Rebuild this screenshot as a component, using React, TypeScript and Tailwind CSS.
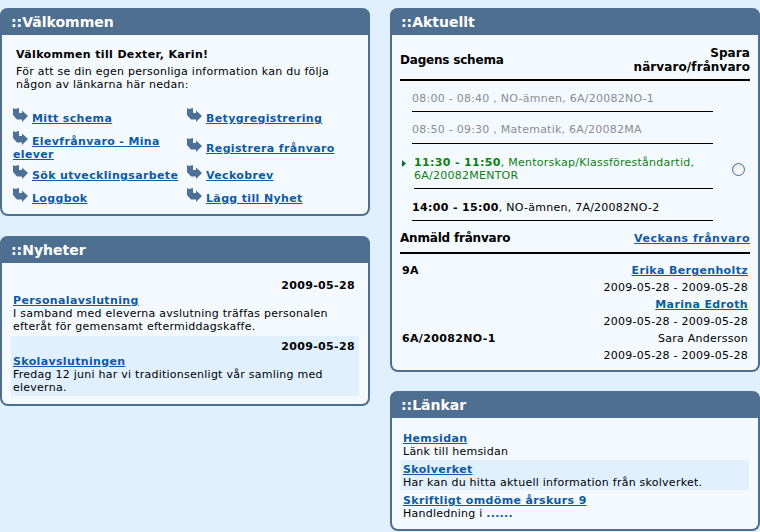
const FONT = "font-['DejaVu_Sans','Verdana',sans-serif]";

function Arrow() {
  return (
    <svg width="16" height="15" viewBox="0 0 16 15" className="inline-block align-top mr-[3px] -mt-[4px]">
      <path d="M0 0 L2 1 L6 0 L6 5 L9 5 L9 2.5 L15 8 L9 14 L9 11.5 L4 11.5 L0 7 Z" fill="#4f7096" />
    </svg>
  );
}

function Link({ children, spacing = "tracking-[0.35px]" }: { children: React.ReactNode; spacing?: string }) {
  return <a href="#" className={`font-bold ${spacing} text-[#0f5aa0] underline`}>{children}</a>;
}

function Bold({ children }: { children: React.ReactNode }) {
  return <b className="font-bold tracking-[0.35px]">{children}</b>;
}

function Panel({ title, children, className }: { title: string; children: React.ReactNode; className?: string }) {
  return (
    <section className={`rounded-[8px] border-2 border-t-0 border-[#4f6f91] bg-[#f4f9fe] ${className ?? ""}`}>
      <h2 className="-mx-[2px] h-[27px] rounded-t-[8px] bg-[#4f6f91] pl-[11px] text-[14px] leading-[28px] font-bold tracking-normal text-white">
        ::{title}
      </h2>
      {children}
    </section>
  );
}

const welcomeLinks = [
  { left: "Mitt schema", right: "Betygregistrering", row: "h-[23px] mb-[2px]" },
  { left: "Elevfrånvaro - Mina elever", right: "Registrera frånvaro", row: "h-[32px]" },
  { left: "Sök utvecklingsarbete", right: "Veckobrev", row: "h-[23px]" },
  { left: "Loggbok", right: "Lägg till Nyhet", row: "h-[23px]" },
];

export default function App() {
  return (
    <main className={`${FONT} flex h-[532px] w-[760px] gap-[20px] overflow-hidden bg-[#e0f0ff] pt-[8px] text-[11px] leading-[13px] tracking-[0.25px] text-black`}>
      <div className="flex w-[370px] flex-col gap-[20px]">
        <Panel title="Välkommen" className="h-[208px]">
          <div className="pl-[14px] pr-[10px] pt-[13px]">
            <p><Bold>Välkommen till Dexter, Karin!</Bold></p>
            <p className="mt-[4px]">För att se din egen personliga information kan du följa någon av länkarna här nedan:</p>
          </div>
          <div className="mt-[16px] flex flex-col pl-[11px]">
            {welcomeLinks.map((item) => (
              <div key={item.left} className={`flex items-center ${item.row}`}>
                <div className="w-[174px]"><Arrow /><Link>{item.left}</Link></div>
                <div><Arrow /><Link>{item.right}</Link></div>
              </div>
            ))}
          </div>
        </Panel>
        <Panel title="Nyheter" className="h-[170px]">
          <div className="pt-[16px] pl-[9px] pr-[9px]">
            <div className="px-[2px] pb-[3px]">
              <p className="pr-[2px] text-right"><Bold>2009-05-28</Bold></p>
              <p className="mt-[2px]"><Link>Personalavslutning</Link></p>
              <p>I samband med eleverna avslutning träffas personalen efteråt för gemensamt eftermiddagskaffe.</p>
            </div>
            <div className="bg-[#e0f0ff] px-[2px] pt-[4px] pb-[2px]">
              <p className="pr-[2px] text-right"><Bold>2009-05-28</Bold></p>
              <p className="mt-[2px]"><Link>Skolavslutningen</Link></p>
              <p>Fredag 12 juni har vi traditionsenligt vår samling med eleverna.</p>
            </div>
          </div>
        </Panel>
      </div>
      <div className="flex w-[370px] flex-col gap-[19px]">
        <Panel title="Aktuellt" className="h-[364px]">
          <div className="px-[8px]">
            <div className="flex items-center justify-between border-b-2 border-black pt-[11px] pb-[5px] text-[12px] leading-[14px] font-bold tracking-[0.1px]">
              <span className="tracking-[-0.2px]">Dagens schema</span>
              <span className="text-right">Spara<br />närvaro/frånvaro</span>
            </div>
            <p className="ml-[12px] mr-[37px] border-b border-black pt-[11px] pb-[6px] text-[#8c8c94]">08:00 - 08:40 , NO-ämnen, 6A/20082NO-1</p>
            <p className="ml-[12px] mr-[37px] border-b border-black pt-[11px] pb-[7px] text-[#8c8c94]">08:50 - 09:30 , Matematik, 6A/20082MA</p>
            <div className="flex items-start">
              <div className="ml-[2px] w-[12px] pt-[16px]">
                <svg width="4" height="7" viewBox="0 0 4 7" className="block">
                  <path d="M0 0 L4 3.5 L0 7 Z" fill="#0a6a3a" />
                </svg>
              </div>
              <div className="w-[299px] border-b border-black pt-[12px] pb-[6px] text-[#0d8012]">
                <Bold>11:30 - 11:50</Bold>, Mentorskap/Klassföreståndartid, 6A/20082MENTOR
              </div>
              <span className="mt-[19px] ml-[19px] h-[13px] w-[13px] rounded-full border border-[#3f6f9f] bg-[radial-gradient(circle_at_60%_70%,#ffffff,#dcdcdc)]" />
            </div>
            <p className="ml-[12px] mr-[37px] border-b border-black pt-[12px] pb-[6px]"><Bold>14:00 - 15:00</Bold>, NO-ämnen, 7A/20082NO-2</p>
            <div className="flex items-center justify-between border-b-2 border-black pt-[10px] pb-[7px]">
              <span className="text-[12px] leading-[14px] font-bold tracking-[-0.2px]">Anmäld frånvaro</span>
              <Link spacing="tracking-[0.5px]">Veckans frånvaro</Link>
            </div>
            <div className="mt-[10px] flex flex-col gap-[4px] px-[2px]">
              <div className="flex justify-between"><Bold>9A</Bold><Link>Erika Bergenholtz</Link></div>
              <div className="text-right">2009-05-28 - 2009-05-28</div>
              <div className="text-right"><Link>Marina Edroth</Link></div>
              <div className="text-right">2009-05-28 - 2009-05-28</div>
              <div className="flex justify-between"><Bold>6A/20082NO-1</Bold><span>Sara Andersson</span></div>
              <div className="text-right">2009-05-28 - 2009-05-28</div>
            </div>
          </div>
        </Panel>
        <Panel title="Länkar" className="h-[140px]">
          <div className="flex flex-col px-[9px] pt-[14px]">
            <div className="px-[2px] pb-[2px]"><Link>Hemsidan</Link><p>Länk till hemsidan</p></div>
            <div className="bg-[#e0f0ff] px-[2px] pt-[3px] pb-[1px]"><Link>Skolverket</Link><p>Har kan du hitta aktuell information från skolverket.</p></div>
            <div className="px-[2px] pt-[4px]">
              <Link>Skriftligt omdöme årskurs 9</Link>
              <p>Handledning i <span className="font-bold text-[#0f5aa0]">......</span></p>
            </div>
          </div>
        </Panel>
      </div>
    </main>
  );
}
